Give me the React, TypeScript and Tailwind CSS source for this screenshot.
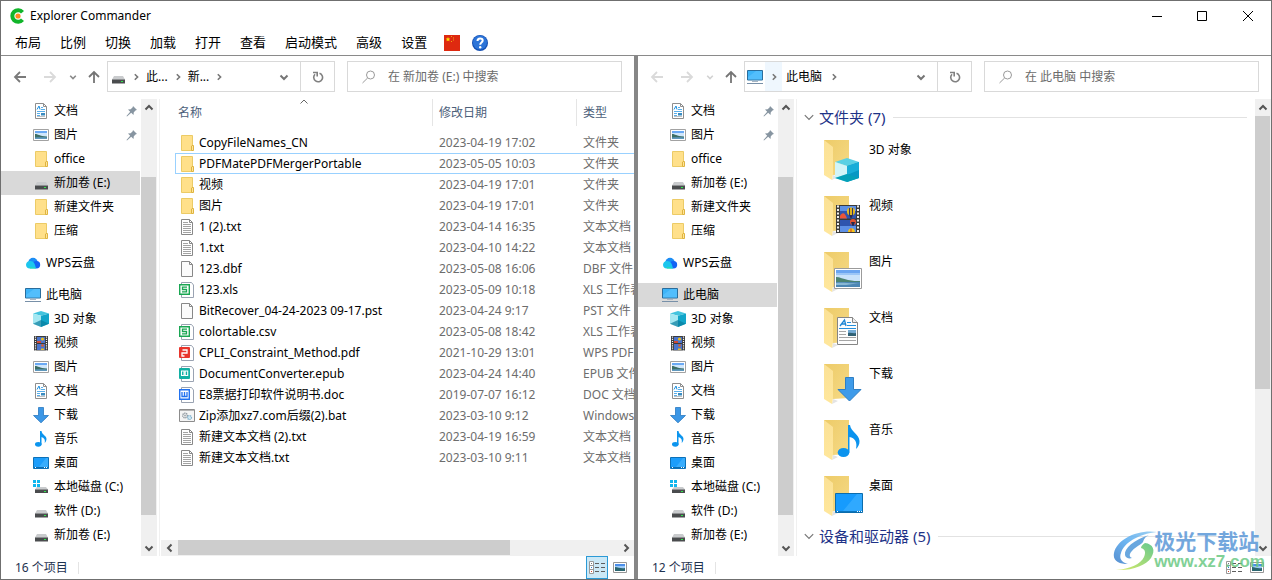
import React, { useState } from "react";

type IconName =
  | "document"
  | "picture"
  | "folder"
  | "drive"
  | "system"
  | "cloud"
  | "computer"
  | "cube"
  | "video"
  | "download"
  | "music"
  | "desktop"
  | "text"
  | "blank"
  | "sheet"
  | "pdf"
  | "epub"
  | "word"
  | "batch";

const drawings: Record<IconName, React.ReactNode> = {
  document: (
    <>
      <path d="M2.500 .5h8l3 3v12h-11z" fill="#fff" stroke="#8e8e8e" />
      <path d="M10.500 .5v3h3" fill="none" stroke="#8e8e8e" />
      <path d="M4 6.500l2-3.500 1 3.500" fill="none" stroke="#1a8fe0" />
      <path d="M8 4.500h2M8 6.500h4M4 8.500h8M4 10.500h3M4 12.500h3" stroke="#58aeea" />
      <path d="M8 10h4v2.500H8z" fill="#3b8cc0" />
      <path d="M4 13.500h8" stroke="#c0c0c0" />
    </>
  ),
  picture: (
    <>
      <path d="M.5 2.500h15v11H.5z" fill="#fff" stroke="#a2a2a2" />
      <path d="M2 4h12v8H2z" fill="#cfe6fb" />
      <path d="M2 4h12v2H2z" fill="#6aa9f4" />
      <path d="M2 7c3 0 4 2 12 2.500V11H2z" fill="#3d6f66" />
      <path d="M2 10.500c4-.5 8-.5 12 0V12H2z" fill="#5f98bd" />
    </>
  ),
  folder: (
    <>
      <path d="M2.500 .5h11v15h-11z" fill="#ffe08a" stroke="#eccb66" />
      <path d="M12.500 15.500v-4.500l.5-.5h1.500v5z" fill="#ffe59b" stroke="#dfb440" />
    </>
  ),
  drive: (
    <>
      <path d="M4 7h9l2 3.500H2z" fill="#c9cbcd" />
      <path d="M2 10h13v4.500H2z" fill="#4a4c4e" />
      <path d="M2 10h13v1H2z" fill="#8f9193" />
      <path d="M11 12h2v1h-2z" fill="#30e84b" />
    </>
  ),
  system: (
    <>
      <path d="M0 1h3v3H0zM4 1h3v3H4zM0 5h3v3H0zM4 5h3v3H4z" fill="#10b6ee" />
      <path d="M4 8h9l2 2.500H2z" fill="#c9cbcd" />
      <path d="M2 10h13v4H2z" fill="#4a4c4e" />
      <path d="M2 10h13v1H2z" fill="#8f9193" />
      <path d="M11 12h2v1h-2z" fill="#30e84b" />
    </>
  ),
  cloud: (
    <>
      <circle cx="8" cy="7.500" r="4.700" fill="#1c8df5" />
      <circle cx="11.500" cy="9.800" r="3.700" fill="#1464f4" />
      <path d="M5 6c4 0 5 3 6 7.500H4.800C2.500 13.500 1 12 1 9.800S3 6 5 6z" fill="#1cc6ee" />
      <path d="M4.500 12c3 .5 5 0 6.500 1.500H5z" fill="#25ddb0" />
    </>
  ),
  computer: (
    <>
      <path d="M.5 1.500h15v9.500H.5z" fill="#3db4f8" stroke="#2a6d9c" />
      <path d="M1 8l8-6h6v8.500H1z" fill="#67c8ff" opacity=".5" />
      <path d="M5 12.500h6" stroke="#a9b6c4" />
      <path d="M0 14.500h16" stroke="#7890a8" />
    </>
  ),
  cube: (
    <>
      <path d="M8 0l8 2.500-8 2.300-8-2.300z" fill="#43c4de" />
      <path d="M0 2.500l8 2.300V16l-8-3.300z" fill="#a5e8f2" />
      <path d="M8 4.800l8-2.300v10.200L8 16z" fill="#12a5c9" />
      <path d="M0 12.700L8 9l8 3.700L8 16z" fill="#087e9e" opacity=".7" />
    </>
  ),
  video: (
    <>
      <path d="M1 1h14v14.500H1z" fill="#3b3b3b" />
      <path d="M2.500 1.500v14M13.500 1.500v14" stroke="#f4f4f4" strokeWidth="1.200" strokeDasharray="1.200 1" />
      <path d="M4 2h8v6H4zM4 9h8v6H4z" fill="#4a74cc" />
      <circle cx="9.500" cy="4" r="1.600" fill="#e8bd22" />
      <path d="M4 6h4v2H4z" fill="#cf4a38" />
      <circle cx="9.500" cy="10.500" r="1.300" fill="#d9602e" />
      <path d="M8 13.500h3V15H8z" fill="#e8bd22" />
    </>
  ),
  download: <path d="M5.500 .5h5v8h5L8 15.800 .5 8.500h5z" fill="#3c97e6" stroke="#2a78c0" strokeWidth=".8" />,
  music: (
    <>
      <ellipse cx="5.300" cy="13.300" rx="3.300" ry="2.400" fill="#0c95ee" />
      <path d="M7 0h1.500c.5 4 5 4.500 5 8 0 1.500-.8 3-1.800 4 .8-3.500-.7-5-3.200-6v7.300H7z" fill="#0c95ee" />
    </>
  ),
  desktop: (
    <>
      <path d="M.5 2.500h15v11H.5z" fill="#1b9dfb" stroke="#0c71b8" />
      <path d="M6 12l7-9h2v9z" fill="#4cb7ff" opacity=".6" />
      <path d="M1 12.500h14" stroke="#0b6cb0" />
      <path d="M2 12.500h1M11 12.500h1M13 12.500h1" stroke="#fff" />
    </>
  ),
  text: (
    <>
      <path d="M2.500 .5h8l3 3v12h-11z" fill="#fff" stroke="#888" />
      <path d="M10.500 .5v3h3" fill="none" stroke="#888" />
      <path d="M4 3.500h5M4 5.500h8M4 7.500h8M4 9.500h8M4 11.500h8M4 13.500h8" stroke="#a3a3a3" />
    </>
  ),
  blank: (
    <>
      <path d="M2.500 .5h8l3 3v12h-11z" fill="#fbfbfb" stroke="#888" />
      <path d="M10.500 .5v3h3" fill="none" stroke="#888" />
    </>
  ),
  sheet: (
    <>
      <path d="M2.500 .5h10l2 2.500v12.500h-12z" fill="#fff" stroke="#9aa3b2" />
      <path d="M.7 2.700h9.600v9.600H.7z" fill="#fff" stroke="#1aa653" strokeWidth="1.400" />
      <path d="M8 5.200H3.500v2.300h4v2.300H3" fill="none" stroke="#1aa653" strokeWidth="1.300" />
    </>
  ),
  pdf: (
    <>
      <path d="M2.500 .5h10l2 2.500v12.500h-12z" fill="#fff" stroke="#9aa3b2" />
      <rect y="2" width="11" height="11" rx="1" fill="#e8352c" />
      <path d="M3.500 5h4.500v3H3v3h2.500" fill="none" stroke="#fff" strokeWidth="1.300" />
    </>
  ),
  epub: (
    <>
      <path d="M2.500 .5h10l2 2.500v12.500h-12z" fill="#fff" stroke="#9aa3b2" />
      <rect y="2" width="11" height="11" rx="1" fill="#13b0a4" />
      <path d="M2.500 5h2.500v4.500H2.500zM6.200 5h2.500v4.500H6.200z" fill="none" stroke="#fff" strokeWidth="1.100" />
    </>
  ),
  word: (
    <>
      <path d="M2.500 .5h10l2 2.500v12.500h-12z" fill="#fff" stroke="#9aa3b2" />
      <path d="M.7 2.700h9.600v9.600H.7z" fill="#fff" stroke="#2272f0" strokeWidth="1.400" />
      <path d="M3 5v4.500h5V5M5.500 5v4.500" fill="none" stroke="#2272f0" strokeWidth="1.300" />
    </>
  ),
  batch: (
    <>
      <path d="M.5 1.500h15v12H.5z" fill="#f4f4f4" stroke="#8c8c8c" />
      <path d="M1 2.500h14" stroke="#b5b5b5" />
      <circle cx="6" cy="7.500" r="2.300" fill="none" stroke="#8e979e" strokeWidth="1.400" strokeDasharray="1.200 .6" />
      <circle cx="6" cy="7.500" r="1" fill="#a5adb3" />
      <circle cx="10.500" cy="9.500" r="2" fill="#cfe6f2" stroke="#7fb0cc" strokeWidth="1.200" strokeDasharray="1.200 .6" />
    </>
  ),
};

function Icon({ name }: { name: IconName }) {
  return (
    <svg className="size-4 shrink-0" viewBox="0 0 16 16" aria-hidden="true">
      {drawings[name]}
    </svg>
  );
}

const overlays: Partial<Record<IconName, React.ReactNode>> = {
  cube: (
    <>
      <path d="M26 21l12 4-12 4-12-4z" fill="#5ad0e4" />
      <path d="M14 25l12 4v16l-12-4z" fill="#7fdbe9" />
      <path d="M14 25l12 4v8l-12 4z" fill="#d2f4f8" />
      <path d="M26 29l12-4v16l-12 4z" fill="#0798c4" />
      <path d="M26 29l12-4v8l-12 5z" fill="#18add8" />
      <path d="M14 41l12-4 12 4-12 4z" fill="#04a0b8" />
    </>
  ),
  video: (
    <>
      <path d="M15 12h24v28H15z" fill="#3a3a3a" />
      <path d="M17 12.500v27M37 12.500v27" stroke="#efefef" strokeWidth="2" strokeDasharray="2 1.500" />
      <path d="M19 13h16v12.500H19zM19 27h16v12H19z" fill="#2f55ae" />
      <path d="M19 13h16v5H19zM19 33h16v6H19z" fill="#5d90e6" />
      <circle cx="30" cy="18.500" r="4" fill="#f3c418" />
      <path d="M28.500 15v7M31.500 15v7" stroke="#33356a" strokeWidth="1.200" />
      <path d="M28 22h4l-1.500 3h-1z" fill="#2b2d50" />
      <path d="M19 23c2-4 5-4 7 2.500h-7z" fill="#ec5638" />
      <circle cx="32" cy="29" r="3" fill="#e2512f" />
      <path d="M30 29h4l-1.500 4h-1z" fill="#26294e" />
      <path d="M27 39c0-5 7-5 7 0z" fill="#f3c418" />
      <path d="M30 35.500V39" stroke="#d33a28" />
    </>
  ),
  picture: (
    <>
      <path d="M13.500 19.500h27v20h-27z" fill="#fff" stroke="#9b9b9b" />
      <path d="M15 21h24v17H15z" fill="#c9e2fb" />
      <path d="M15 21h24v3H15z" fill="#6ba5f1" />
      <path d="M15 24h24v2H15z" fill="#9cc6f7" />
      <path d="M15 28c4 0 7 2 12 3s8 1 12 1v2H15z" fill="#4c8371" />
      <path d="M15 33h24v5H15z" fill="#4d87b4" />
      <path d="M15 34c8-1 14 1 24 0l-14 2H15z" fill="#8ab8d4" />
    </>
  ),
  document: (
    <>
      <path d="M16.500 12.500h15l5 5v22h-20z" fill="#fdfdfd" stroke="#858585" />
      <path d="M31.500 12.500v5h5" fill="#eee" stroke="#858585" />
      <path d="M19 21l4.500-6 1.500 6M20.500 19h4" fill="none" stroke="#1e86d4" strokeWidth="1.300" />
      <path d="M26 17.500h4M26 20.500h9M18 23.500h17" stroke="#2490dd" />
      <path d="M18 26.500h7M18 29.500h7M18 32.500h17M18 35.500h17" stroke="#a5a5a5" />
      <path d="M27 25h8v6h-8z" fill="#74abd5" />
      <path d="M27 28c3-1 5 1 8 0v3h-8z" fill="#306174" />
    </>
  ),
  download: <path d="M24.500 16.500h8v12h7.500L28.500 40 17 28.500h7.500z" fill="#3f9be9" stroke="#2f7fc4" />,
  music: (
    <>
      <ellipse cx="22.500" cy="35.500" rx="5.800" ry="4.600" fill="#0b93ee" />
      <path d="M27 8h2c1 7 9 9 9.500 16 .2 3.500-1.500 6-3.500 8 1.500-7-1-11-6.500-12v15.500H27z" fill="#0b93ee" />
    </>
  ),
  desktop: (
    <>
      <path d="M14.500 20.500h27v19h-27z" fill="#169bfd" stroke="#0b6cac" />
      <path d="M22 38l14-17h5v17z" fill="#43b2ff" opacity=".6" />
      <path d="M15 38.500h26" stroke="#0b75be" />
      <path d="M16 38.500h1M36 38.500h1M38 38.500h1M40 38.500h1" stroke="#fff" />
    </>
  ),
};

function BigFolder({ name }: { name: IconName }) {
  return (
    <svg className="h-12 w-11 shrink-0" viewBox="0 0 44 48" aria-hidden="true">
      <defs>
        <linearGradient id={"back-" + name} x1="0" x2="1" y1="0" y2="1">
          <stop offset="0" stopColor="#edcb68" />
          <stop offset="1" stopColor="#f6da86" />
        </linearGradient>
        <linearGradient id={"front-" + name} x1="0" x2="0" y1="0" y2="1">
          <stop offset="0" stopColor="#fbe196" />
          <stop offset="1" stopColor="#ffe79c" />
        </linearGradient>
      </defs>
      <path d="M11 43l6-3-5-2z" fill="#e4e4e4" />
      <path d="M3 3h25v34l-16 1-9-3z" fill={"url(#back-" + name + ")"} />
      <path d="M3 3l9 7v27l-1 6-8-5z" fill={"url(#front-" + name + ")"} />
      {overlays[name]}
    </svg>
  );
}

type Dir = "up" | "down" | "left" | "right";
const chevrons: Record<Dir, string> = {
  up: "M1.500 6.500L5 3l3.500 3.500",
  down: "M1.500 3.500L5 7l3.500-3.500",
  left: "M6.500 1.500L3 5l3.500 3.500",
  right: "M3.500 1.500L7 5l-3.500 3.500",
};

function Chevron({ dir, className }: { dir: Dir; className: string }) {
  return (
    <svg className={"shrink-0 " + className} viewBox="0 0 10 10" fill="none" stroke="currentColor" aria-hidden="true">
      <path d={chevrons[dir]} />
    </svg>
  );
}

interface Place {
  icon: IconName;
  label: string;
  root?: boolean;
  pinned?: boolean;
}

const places: Place[] = [
  { icon: "document", label: "文档", pinned: true },
  { icon: "picture", label: "图片", pinned: true },
  { icon: "folder", label: "office" },
  { icon: "drive", label: "新加卷 (E:)" },
  { icon: "folder", label: "新建文件夹" },
  { icon: "folder", label: "压缩" },
  { icon: "cloud", label: "WPS云盘", root: true },
  { icon: "computer", label: "此电脑", root: true },
  { icon: "cube", label: "3D 对象" },
  { icon: "video", label: "视频" },
  { icon: "picture", label: "图片" },
  { icon: "document", label: "文档" },
  { icon: "download", label: "下载" },
  { icon: "music", label: "音乐" },
  { icon: "desktop", label: "桌面" },
  { icon: "system", label: "本地磁盘 (C:)" },
  { icon: "drive", label: "软件 (D:)" },
  { icon: "drive", label: "新加卷 (E:)" },
];

const files: [IconName, string, string, string][] = [
  ["folder", "CopyFileNames_CN", "2023-04-19 17:02", "文件夹"],
  ["folder", "PDFMatePDFMergerPortable", "2023-05-05 10:03", "文件夹"],
  ["folder", "视频", "2023-04-19 17:01", "文件夹"],
  ["folder", "图片", "2023-04-19 17:01", "文件夹"],
  ["text", "1 (2).txt", "2023-04-14 16:35", "文本文档"],
  ["text", "1.txt", "2023-04-10 14:22", "文本文档"],
  ["blank", "123.dbf", "2023-05-08 16:06", "DBF 文件"],
  ["sheet", "123.xls", "2023-05-09 10:18", "XLS 工作表"],
  ["blank", "BitRecover_04-24-2023 09-17.pst", "2023-04-24 9:17", "PST 文件"],
  ["sheet", "colortable.csv", "2023-05-08 18:42", "XLS 工作表"],
  ["pdf", "CPLI_Constraint_Method.pdf", "2021-10-29 13:01", "WPS PDF 文档"],
  ["epub", "DocumentConverter.epub", "2023-04-24 14:40", "EPUB 文件"],
  ["word", "E8票据打印软件说明书.doc", "2019-07-07 16:12", "DOC 文档"],
  ["batch", "Zip添加xz7.com后缀(2).bat", "2023-03-10 9:12", "Windows 批处理文件"],
  ["text", "新建文本文档 (2).txt", "2023-04-19 16:59", "文本文档"],
  ["text", "新建文本文档.txt", "2023-03-10 9:11", "文本文档"],
];

const libraries: [IconName, string][] = [
  ["cube", "3D 对象"],
  ["video", "视频"],
  ["picture", "图片"],
  ["document", "文档"],
  ["download", "下载"],
  ["music", "音乐"],
  ["desktop", "桌面"],
];

const menus = ["布局", "比例", "切换", "加载", "打开", "查看", "启动模式", "高级", "设置"];

function Arrow({ dir, className }: { dir: Dir; className: string }) {
  const d =
    dir === "up"
      ? "M7 13V2M2 7l5-5 5 5"
      : dir === "left"
        ? "M13 7H2M7 2L2 7l5 5"
        : "M1 7h11M7 2l5 5-5 5";
  return (
    <svg className={"size-3.5 " + className} viewBox="0 0 14 14" fill="none" stroke="currentColor" strokeWidth="1.800" aria-hidden="true">
      <path d={d} />
    </svg>
  );
}

function NavBar({ canGoBack, children, searchLabel }: { canGoBack: boolean; children: React.ReactNode; searchLabel: string }) {
  return (
    <div className="flex h-[43px] shrink-0 items-center px-3 pb-0.5">
      <div className="flex w-[94px] shrink-0 items-center">
        <button aria-label="后退" className="flex w-[30px]">
          <Arrow dir="left" className={canGoBack ? "text-[#7a7a7a]" : "text-[#dadada]"} />
        </button>
        <button aria-label="前进" className="flex w-[26px]">
          <Arrow dir="right" className="text-[#dadada]" />
        </button>
        <button aria-label="最近浏览的位置" className="flex w-[18px]">
          <Chevron dir="down" className={"size-2 stroke-2 " + (canGoBack ? "text-[#8a8a8a]" : "text-[#d2d2d2]")} />
        </button>
        <button aria-label="上移" className="flex">
          <Arrow dir="up" className="text-[#757575]" />
        </button>
      </div>
      <div className="grid min-w-0 flex-1 grid-cols-[228fr_275fr] gap-3">
        <div className="flex h-[31px] min-w-0 border border-[#d9d9d9]">
          <div className="flex min-w-0 flex-1 items-center">{children}</div>
          <button aria-label="以前的位置" className="flex w-8 items-center justify-center text-[#757575]">
            <Chevron dir="down" className="size-2.5 stroke-2" />
          </button>
          <button aria-label="刷新" className="flex w-[34px] items-center justify-center border-l border-[#d9d9d9] text-[#808080]">
            <svg className="size-3" viewBox="0 0 12 12" fill="none" stroke="currentColor" strokeWidth="1.600" aria-hidden="true">
              <path d="M7.500 2.200A4.400 4.400 0 1 1 3 3.300" />
              <path d="M1 1.500h4.200v4" />
            </svg>
          </button>
        </div>
        <label className="flex h-[31px] min-w-0 items-center border border-[#d9d9d9] pl-3.5">
          <svg className="size-3.5 shrink-0 text-[#9a9a9a]" viewBox="0 0 14 14" fill="none" stroke="currentColor" aria-hidden="true">
            <circle cx="8.500" cy="5" r="4" />
            <path d="M5.600 8L.5 13" />
          </svg>
          <input
            type="search"
            aria-label={searchLabel}
            placeholder={searchLabel}
            className="ml-3 min-w-0 flex-1 bg-transparent text-[12px] outline-none placeholder:text-[#6b6b6b] placeholder:opacity-100"
          />
        </label>
      </div>
    </div>
  );
}

function Crumb({ children }: { children: React.ReactNode }) {
  return <button className="shrink-0 text-[12px] leading-4 text-black">{children}</button>;
}

function VerticalScroll({ before, thumb, after }: { before: number; thumb: number; after: number }) {
  return (
    <div className="flex w-4 shrink-0 flex-col bg-[#f0f0f0] text-[#555]">
      <button aria-label="向上滚动" className="flex h-[17px] items-center justify-center pr-px">
        <Chevron dir="up" className="size-2.5 stroke-2" />
      </button>
      <div className="flex flex-1 flex-col">
        <div style={{ flexGrow: before }} />
        <div className="mr-px bg-[#cdcdcd]" style={{ flexGrow: thumb }} />
        <div style={{ flexGrow: after }} />
      </div>
      <button aria-label="向下滚动" className="flex h-[17px] items-center justify-center pr-px">
        <Chevron dir="down" className="size-2.5 stroke-2" />
      </button>
    </div>
  );
}

function SideBar({ initial }: { initial: number }) {
  const [selected, setSelected] = useState(initial);
  return (
    <nav className="w-[140px] shrink-0 overflow-hidden">
      <ul>
        {places.map((place, i) => (
          <li key={i} className={place.root ? "mt-2" : ""}>
            <button
              onClick={() => setSelected(i)}
              className={
                "flex h-6 w-[139px] items-center gap-[5px] pr-0.5 text-left text-[12px] whitespace-nowrap " +
                (place.root ? "pl-6 " : "pl-8 ") +
                (selected === i ? "bg-[#d9d9d9]" : "")
              }
            >
              <Icon name={place.icon} />
              <span className="flex-1">{place.label}</span>
              {place.pinned && (
                <svg className="size-3 text-[#8795a1]" viewBox="0 0 12 12" aria-hidden="true">
                  <path d="M7 1l4 4-1.200.3-2 2-.3 2.700L5.200 7.800 1 11.500.5 11l3.700-4.200L2 4.500l2.700-.3 2-2z" fill="currentColor" />
                </svg>
              )}
            </button>
          </li>
        ))}
      </ul>
    </nav>
  );
}

function StatusBar({ count, detailsOn }: { count: string; detailsOn: boolean }) {
  return (
    <footer className="flex h-[23px] shrink-0 items-center text-[12px] text-[#1e3250]">
      <span className="pl-3.5">{count}</span>
      <span className="ml-2.5 h-3 w-px bg-[#e4e4e4]" />
      <button
        aria-label="详细信息"
        className={
          "ml-auto flex h-[23px] w-[22px] items-center justify-center border " +
          (detailsOn ? "border-[#2b9ad6] bg-[#cbe8f6]" : "border-transparent")
        }
      >
        <svg className="size-4 shrink-0" viewBox="0 0 16 16" fill="none" aria-hidden="true">
          <path d="M.5 1.500h4v12h-4zM.5 5.500h4M.5 9.500h4" stroke="#999" fill="#fff" />
          <path d="M2 3.500h1" stroke="#777" />
          <path d="M2 11.500h1" stroke="#d2452d" />
          <path d="M2 7.500h1" stroke="#2b80d2" />
          <path d="M6 3.500h4M12 3.500h4M6 7.500h4M12 7.500h4M6 11.500h4M12 11.500h4" stroke="#5e5e5e" />
        </svg>
      </button>
      <button aria-label="大图标" className="mr-[3px] ml-px flex size-[22px] items-center justify-center">
        <svg className="h-[11px] w-3.5" viewBox="0 0 14 11" aria-hidden="true">
          <path d="M.5 .5h13v10H.5z" fill="#fff" stroke="#969696" />
          <path d="M2 2h10v7H2z" fill="#9dcaf6" />
          <path d="M2 2h10v2H2z" fill="#4c8fea" />
          <path d="M2 5c3 0 6 2 10 1v3H2z" fill="#2b6670" />
        </svg>
      </button>
    </footer>
  );
}

function FileTable() {
  return (
    <div className="flex min-w-0 flex-1 flex-col">
      <div className="min-h-0 flex-1 overflow-hidden pl-[15px]">
        <table className="w-[560px] table-fixed border-collapse text-left text-[12px] whitespace-nowrap text-[#6d6d6d]">
          <colgroup>
            <col className="w-[257px]" />
            <col className="w-36" />
            <col />
          </colgroup>
          <thead>
            <tr className="h-[33px] text-[#4c607a]">
              <th className="p-0 align-top font-normal">
                <div className="relative h-[27px] pl-[3px] leading-[27px]">
                  名称
                  <Chevron dir="up" className="absolute inset-x-0 -top-0.5 mx-auto size-2.5 text-[#666]" />
                </div>
              </th>
              <th className="p-0 align-top font-normal">
                <div className="h-[27px] border-l border-[#e5e5e5] pl-1.5 leading-[27px]">修改日期</div>
              </th>
              <th className="p-0 align-top font-normal">
                <div className="h-[27px] border-l border-[#e5e5e5] pl-1.5 leading-[27px]">类型</div>
              </th>
            </tr>
          </thead>
          <tbody>
            {files.map(([icon, name, date, kind], i) => (
              <tr key={name} className={"h-[21px] " + (i === 1 ? "outline-1 -outline-offset-1 outline-[#99d1ff]" : "")}>
                <td className="p-0">
                  <div className="flex h-[21px] items-center gap-1 pl-1 text-black">
                    <Icon name={icon} />
                    {name}
                  </div>
                </td>
                <td className="p-0 pl-[7px]">{date}</td>
                <td className="p-0 pl-[7px]">{kind}</td>
              </tr>
            ))}
          </tbody>
        </table>
      </div>
      <div className="ml-px flex h-4 shrink-0 bg-[#f0f0f0] text-[#555]">
        <button aria-label="向左滚动" className="flex w-[17px] items-center justify-center">
          <Chevron dir="left" className="size-2.5 stroke-2" />
        </button>
        <div className="flex flex-1">
          <div className="mb-px flex-[332] bg-[#cdcdcd]" />
          <div className="flex-[107]" />
        </div>
        <button aria-label="向右滚动" className="flex w-[17px] items-center justify-center">
          <Chevron dir="right" className="size-2.5 stroke-2" />
        </button>
      </div>
    </div>
  );
}

function GroupHeader({ children }: { children: React.ReactNode }) {
  return (
    <h2 className="flex h-[22px] items-center pl-1.5 text-[15px] whitespace-nowrap text-[#1e3287]">
      <Chevron dir="down" className="mr-1 size-3 text-[#777]" />
      {children}
      <span className="mr-2 ml-2 h-px flex-1 bg-[#e2e2e2]" />
    </h2>
  );
}

export default function App() {
  return (
    <div className="relative flex h-screen flex-col overflow-hidden border border-[#6f6f6f] bg-white font-['Noto_Sans','Noto_Sans_CJK_SC',sans-serif] text-black">
      <header className="flex h-[29px] shrink-0 items-center pl-2">
        <svg className="size-4" viewBox="0 0 16 16" aria-hidden="true">
          <path d="M13.500 4.200A5.800 5.800 0 1 0 13.500 11.800" fill="none" stroke="#11b52a" strokeWidth="4" />
          <circle cx="9" cy="8" r="2.600" fill="#ff8a1c" />
        </svg>
        <h1 className="ml-[5px] text-[12px]">Explorer Commander</h1>
        <div className="ml-auto flex h-full">
          <button aria-label="最小化" className="flex w-[45px] items-center justify-center">
            <svg className="size-2.5" viewBox="0 0 10 10" stroke="#000" aria-hidden="true">
              <path d="M0 5.500h10" />
            </svg>
          </button>
          <button aria-label="最大化" className="flex w-[46px] items-center justify-center">
            <svg className="size-2.5" viewBox="0 0 10 10" fill="none" stroke="#000" aria-hidden="true">
              <path d="M.5 .5h9v9h-9z" />
            </svg>
          </button>
          <button aria-label="关闭" className="flex w-[46px] items-center justify-center">
            <svg className="size-2.5" viewBox="0 0 10 10" stroke="#000" aria-hidden="true">
              <path d="M0 0l10 10M10 0L0 10" />
            </svg>
          </button>
        </div>
      </header>
      <div className="flex h-[26px] shrink-0 items-center gap-[19px] border-b border-[#8a8a8a] pl-3.5 text-[13px]">
        {menus.map((menu) => (
          <button key={menu}>{menu}</button>
        ))}
        <button aria-label="语言" className="-ml-0.5">
          <svg className="size-4" viewBox="0 0 16 16" aria-hidden="true">
            <path d="M0 0h16v16H0z" fill="#de2910" />
            <path d="M4 2l.7 1.500 1.600.1-1.200 1.100.4 1.600L4 5.500l-1.500.8.4-1.600-1.200-1.100 1.600-.1z" fill="#ffde00" />
            <path d="M7 1.500h1M9 3h1M9 5h1M7 6.500h1" stroke="#f0a410" />
          </svg>
        </button>
        <button aria-label="帮助" className="-ml-[7px]">
          <svg className="size-4" viewBox="0 0 16 16" aria-hidden="true">
            <circle cx="8" cy="8" r="8" fill="#1450b4" />
            <circle cx="8" cy="7.500" r="7" fill="#2c74d8" />
            <path d="M5.500 6c0-3.400 5.200-3.400 5.200-.4 0 2-2.500 2-2.500 4.100" fill="none" stroke="#fff" strokeWidth="2" />
            <circle cx="8.200" cy="12.200" r="1.200" fill="#fff" />
          </svg>
        </button>
      </div>
      <main className="flex min-h-0 flex-1">
        <section className="flex min-w-0 flex-1 flex-col">
          <NavBar canGoBack searchLabel="在 新加卷 (E:) 中搜索">
            <span className="flex items-center gap-1.5 pl-0.5 text-[#777]">
              <Icon name="drive" />
              <Chevron dir="right" className="size-2 stroke-2" />
              <Crumb>此...</Crumb>
              <Chevron dir="right" className="size-2 stroke-2" />
              <Crumb>新...</Crumb>
              <Chevron dir="right" className="size-2 stroke-2" />
            </span>
          </NavBar>
          <div className="flex min-h-0 flex-1">
            <SideBar initial={3} />
            <VerticalScroll before={61} thumb={338} after={24} />
            <div className="ml-0.5 w-px bg-[#f0f0f0]" />
            <FileTable />
          </div>
          <StatusBar count="16 个项目" detailsOn />
        </section>
        <div className="w-1 shrink-0 bg-[#868686]" />
        <section className="flex min-w-0 flex-1 flex-col">
          <NavBar canGoBack={false} searchLabel="在 此电脑 中搜索">
            <span className="flex h-full items-center pl-0.5 text-[#777]">
              <Icon name="computer" />
              <span className="mr-1 ml-0.5 flex h-full w-[17px] items-center justify-center bg-[#eff7fe]">
                <Chevron dir="right" className="size-2 stroke-2" />
              </span>
              <span className="mr-2 flex">
                <Crumb>此电脑</Crumb>
              </span>
              <Chevron dir="right" className="size-2 stroke-2" />
            </span>
          </NavBar>
          <div className="flex min-h-0 flex-1">
            <SideBar initial={7} />
            <VerticalScroll before={61} thumb={338} after={24} />
            <div className="ml-0.5 w-px bg-[#f0f0f0]" />
            <div className="min-w-0 flex-1 overflow-hidden pt-[7px]">
              <GroupHeader>文件夹 (7)</GroupHeader>
              <ul className="mt-[5px] pl-6">
                {libraries.map(([icon, label]) => (
                  <li key={label} className="flex h-14 gap-1 pt-1">
                    <BigFolder name={icon} />
                    <span className="mt-[5px] text-[12px] leading-4">{label}</span>
                  </li>
                ))}
              </ul>
              <GroupHeader>设备和驱动器 (5)</GroupHeader>
            </div>
            <VerticalScroll before={0} thumb={273} after={150} />
          </div>
          <StatusBar count="12 个项目" detailsOn={false} />
        </section>
      </main>
      <div className="pointer-events-none absolute right-1.5 bottom-1.5 flex items-center opacity-85">
        <svg className="h-11 w-[46px]" viewBox="0 0 46 44" aria-hidden="true">
          <defs>
            <linearGradient id="swirl-blue" x1="1" x2="0" y1="0" y2="1">
              <stop offset="0" stopColor="#8fc8ee" />
              <stop offset=".5" stopColor="#55aaf0" />
              <stop offset="1" stopColor="#3a7bc8" />
            </linearGradient>
            <linearGradient id="swirl-green" x1="1" x2="0" y1="0" y2="1">
              <stop offset="0" stopColor="#4cc07c" />
              <stop offset="1" stopColor="#d5e84c" />
            </linearGradient>
          </defs>
          <path d="M45 3C26 0 5 10 2 24c-1.500 8 5 11 14 11-7-2-9-6-7-11C12 14 26 5 45 3z" fill="url(#swirl-blue)" />
          <path d="M37 6C22 11 12 19 13 26c.5 3 4 4 7 3-3-1-3-4 0-7 3-4 10-7 11-9 1-3 2-5 6-7z" fill="#4f98da" />
          <path d="M33 14c8 1 11 7 6 15-5 7-19 13-35 12 14-1 25-6 28-13 2-5 1-8-3-9 0-2 2-4 4-5z" fill="url(#swirl-green)" />
        </svg>
        <div className="-ml-1 flex flex-col whitespace-nowrap">
          <span className="text-[21px] leading-[22px] font-bold text-[#5b98d8]">极光下载站</span>
          <span className="font-['Liberation_Sans',sans-serif] text-[17px] leading-5 font-bold text-[#6cc984]">www.xz7.com</span>
        </div>
      </div>
    </div>
  );
}
